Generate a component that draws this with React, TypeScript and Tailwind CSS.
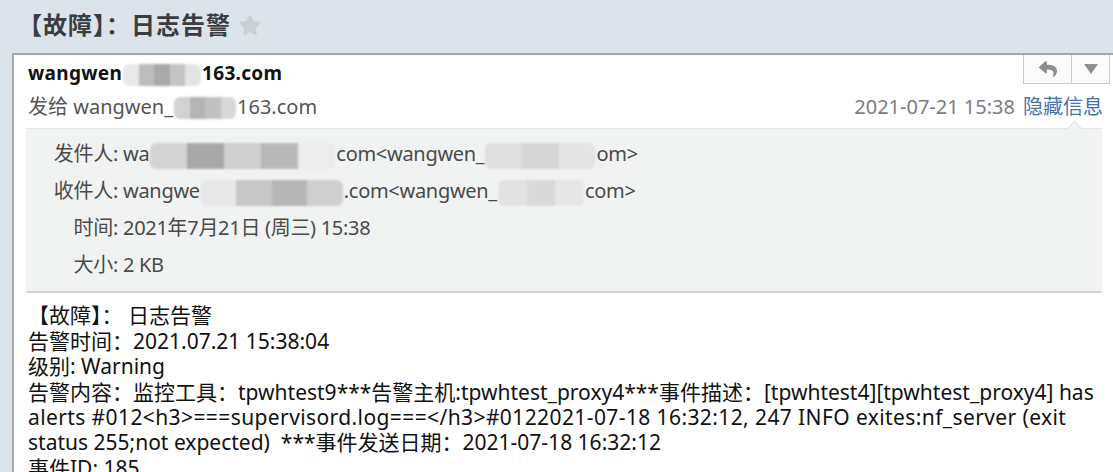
import { FaReply, FaStar } from 'react-icons/fa';

const Redact = ({ w, h = 22, shades }: { w: number; h?: number; shades: string[] }) => (
  <span
    className="inline-flex align-middle overflow-hidden rounded-[6px] blur-[1px] mx-[1px]"
    style={{ width: w, height: h }}
  >
    {shades.map((c, i) => (
      <span key={i} className="flex-1 h-full" style={{ background: c }} />
    ))}
  </span>
);

const App = () => {
  const body = [
    '【故障】： 日志告警',
    '告警时间：2021.07.21 15:38:04',
    '级别: Warning',
    '告警内容：监控工具：tpwhtest9***告警主机:tpwhtest_proxy4***事件描述：[tpwhtest4][tpwhtest_proxy4] has',
    'alerts #012<h3>===supervisord.log===</h3>#0122021-07-18 16:32:12, 247 INFO exites:nf_server (exit',
    'status 255;not expected)  ***事件发送日期：2021-07-18 16:32:12',
    '事件ID: 185',
  ];

  return (
    <div className="w-[1113px] h-[472px] overflow-hidden bg-[#dce3ea] font-['Noto_Sans','Noto_Sans_CJK_SC',sans-serif]">
      {/* Subject */}
      <div className="flex items-center h-[53px] pl-[18px] pb-[4px]">
        <h1 className="text-[24px] font-bold text-[#3a3d40] tracking-[1px]">【故障】：日志告警</h1>
        <FaStar className="ml-[8px] text-[#c9cfd5]" size={22} />
      </div>

      {/* Mail panel */}
      <div className="relative ml-[12px] h-[419px] bg-white border-l-2 border-t-2 border-[#a6a8aa]">
        {/* reply buttons */}
        <div className="absolute top-0 right-[3px] flex h-[29px] border border-t-0 border-[#c9cbcd] bg-[#fbfbfb]">
          <button className="w-[48px] flex items-center justify-center border-r border-[#c9cbcd]">
            <FaReply className="text-[#8c8f92]" size={18} />
          </button>
          <button className="w-[37px] flex items-center justify-center">
            <svg width="14" height="10" viewBox="0 0 14 10">
              <polygon points="0,0 14,0 7,10" fill="#8c8f92" />
            </svg>
          </button>
        </div>

        {/* header */}
        <div className="pl-[14px] pr-[10px] pt-[6px]">
          <div className="text-[19px] leading-[24px] font-bold text-[#111] tracking-[0.3px]">
            wangwen
            <Redact w={78} shades={['#e9e9e9', '#bdbdbd', '#a9a9a9', '#c4c4c4', '#e3e3e3']} />
            163.com
          </div>
          <div className="mt-[9px] flex justify-between items-center text-[20px] leading-[24px]">
            <div className="text-[#555]">
              发给 wangwen_
              <Redact w={62} shades={['#d2d2d2', '#b4b4b4', '#c0c0c0', '#d8d8d8']} />
              163.com
            </div>
            <div className="flex items-center">
              <span className="text-[#7b7d80]">2021-07-21 15:38</span>
              <span className="ml-[8px] text-[#4673a8]">隐藏信息</span>
            </div>
          </div>
        </div>

        {/* details */}
        <div className="relative mt-[9px] ml-[12px] mr-[11px] bg-[#f1f3f3] border-t border-[#e3e6e7] border-b-2 border-b-[#d2d4d5] pt-[6px] pb-[8px] text-[20px] leading-[37px] text-[#4a4a4a] tracking-[-0.3px]">
          <span className="absolute -top-[6px] right-[22px] w-[11px] h-[11px] rotate-45 bg-[#f1f3f3] border-l border-t border-[#e3e6e7]" />
          <div className="flex">
            <span className="w-[92px] text-right">发件人:</span>
            <span className="ml-[5px]">
              wa
              <Redact w={185} h={26} shades={['#d4d4d4', '#a8a8a8', '#cfcfcf', '#b9b9b9', '#ececec']} />
              com&lt;wangwen_
              <Redact w={110} h={26} shades={['#e0e0e0', '#d6d6d6', '#e4e4e4']} />
              om&gt;
            </span>
          </div>
          <div className="flex">
            <span className="w-[92px] text-right">收件人:</span>
            <span className="ml-[5px]">
              wangwe
              <Redact w={142} h={26} shades={['#e8e8e8', '#c7c7c7', '#b7b7b7', '#cfcfcf']} />
              .com&lt;wangwen_
              <Redact w={86} h={26} shades={['#e2e2e2', '#d9d9d9', '#e6e6e6']} />
              com&gt;
            </span>
          </div>
          <div className="flex">
            <span className="w-[92px] text-right">时间:</span>
            <span className="ml-[5px]">2021年7月21日 (周三) 15:38</span>
          </div>
          <div className="flex">
            <span className="w-[92px] text-right">大小:</span>
            <span className="ml-[5px]">2 KB</span>
          </div>
        </div>

        {/* body */}
        <div className="mt-[10px] pl-[14px] text-[21px] leading-[25.4px] text-[#111]">
          {body.map((line, i) => (
            <div key={i} className={`whitespace-pre ${i === 4 ? 'tracking-[0.4px]' : ''}`}>{line}</div>
          ))}
        </div>
      </div>
    </div>
  );
};

export default App;
